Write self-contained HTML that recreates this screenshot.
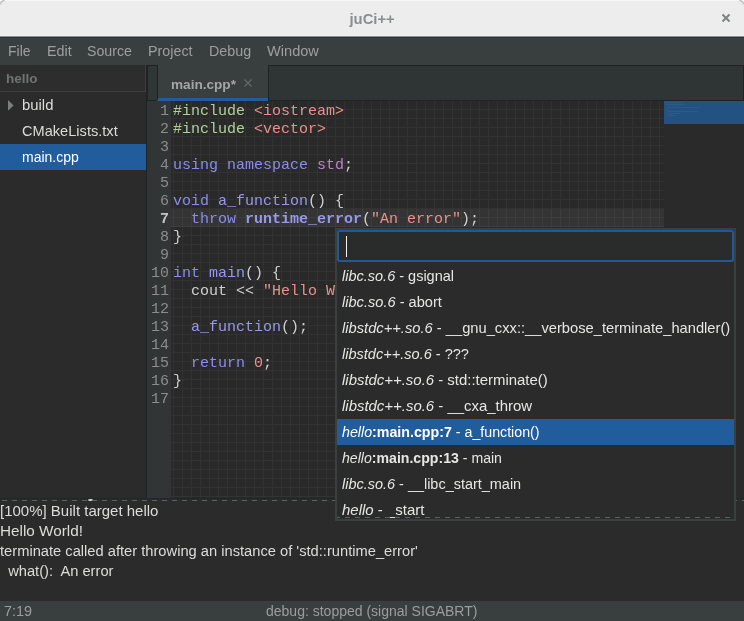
<!DOCTYPE html>
<html><head><meta charset="utf-8">
<style>
*{margin:0;padding:0;box-sizing:border-box}
html,body{width:744px;height:621px;overflow:hidden;background:#2b2b2b}
body{position:relative;font-family:"Liberation Sans",sans-serif;will-change:transform}
.a{position:absolute;white-space:pre}
#title{position:absolute;left:0;top:0;width:744px;height:38px;background:#ededed;border-radius:4.5px 4.5px 0 0;border-bottom:1px solid #2e3434;box-shadow:inset 0 -1px 0 #8d8f8f, inset 0 -2px 0 #f2f2f2}
#menubar{position:absolute;left:0;top:38px;width:744px;height:27px;background:#393f3f}
.mi{position:absolute;top:-1px;font-size:14px;line-height:28px;color:#9c9f9f}
#side{position:absolute;left:0;top:65px;width:146px;height:433px;background:#2b2b2b}
#sidehead{position:absolute;left:0;top:65px;width:146px;height:27px;background:#2d2d2d;border-bottom:1px solid #3a3e3e;border-right:1px solid #3a3e3e}
.tr{position:absolute;left:0;width:146px;height:26px}
.tt{position:absolute;left:22px;font-size:14px;color:#dcdcda;line-height:26px}
#sep{position:absolute;left:146px;top:65px;width:1px;height:433px;background:#1f2323}
#nbbox{position:absolute;left:147px;top:65px;width:11px;height:36px;background:#303535;border:1px solid #1f2323}
#nbhead{position:absolute;left:268px;top:65px;width:476px;height:36px;background:#2f3434;border:1px solid #1f2323}
#tab{position:absolute;left:158px;top:65px;width:110px;height:36px;background:#393f3f}
#tabline{position:absolute;left:157px;top:98px;width:111px;height:3px;background:#215d9c;clip-path:polygon(1.5px 0,100% 0,100% 100%,0 100%)}
#gutter{position:absolute;left:147px;top:101px;width:24px;height:397px;background:#313536}
#code{position:absolute;left:171px;top:101px;width:493px;height:397px;background-color:#292929;
 background-image:linear-gradient(to right,#323232 1px,transparent 1px),linear-gradient(to bottom,#323232 1px,transparent 1px);
 background-size:9px 9px;background-position:2px 8px}
#curline{position:absolute;left:171px;top:209px;width:493px;height:18px;background:rgba(255,255,255,0.055)}
#mini{position:absolute;left:664px;top:101px;width:80px;height:397px;background:#2a2a2a}
#minisel{position:absolute;left:664px;top:101px;width:80px;height:23px;background:#235282}
.mm{position:absolute;height:1px;background:rgba(200,210,230,0.06)}
.ln{position:absolute;left:147px;width:22px;text-align:right;font-family:"Liberation Mono",monospace;font-size:15px;line-height:18px;color:#8c8c8c;margin-top:2px}
.cl{position:absolute;left:173px;font-family:"Liberation Mono",monospace;font-size:15px;line-height:18px;color:#cfcfcf;white-space:pre;margin-top:2px}
.kw{color:#8b8bf0}.fn{color:#9898ec}.st{color:#e8918b}.pp{color:#b0d098}.ns{color:#c27fcf}.b{font-weight:bold}
#term{position:absolute;left:0;top:499px;width:744px;height:102px;background:#2b2b2b}
.tl{position:absolute;left:0;font-size:14.7px;line-height:20px;color:#dcdcda;white-space:pre;margin-top:2px}
#status{position:absolute;left:0;top:601px;width:744px;height:20px;background:#393f3f}
#popup{position:absolute;left:335px;top:228px;width:401px;height:292.5px;background:#2b2b2b;border:2px solid #3a3f3f;overflow:hidden}
#entry{position:absolute;left:0px;top:0px;width:397px;height:32px;border:2px solid #1f5996;border-radius:2.5px;background:#2a2b2b}
.pr{position:absolute;left:0;width:397px;height:26px;font-size:14.6px;line-height:26px;color:#e6e6e4;padding-left:5px;white-space:pre;text-indent:0;padding-top:0}

.pr i{font-style:italic}
.sel{background:#215d9c;color:#fff}
</style></head><body>
<div style="position:absolute;left:0;top:0;width:744px;height:8px;background:#fff"></div>
<div id="title">
 <div class="a" style="left:349.5px;top:8.5px;font-size:14.8px;font-weight:bold;color:#8b8e8f;line-height:20px">juCi++</div>
 <svg style="position:absolute;left:721px;top:13px" width="10" height="10" viewBox="0 0 10 10"><path d="M1.5 1.5L8.5 8.5M8.5 1.5L1.5 8.5" stroke="#7f8383" stroke-width="2"/></svg>
</div>
<svg style="position:absolute;left:0;top:0" width="8" height="8"><path d="M0.6 4.5A4 4 0 0 1 4.5 0.6" fill="none" stroke="#b9b9b9" stroke-width="1.1"/></svg>
<svg style="position:absolute;left:736px;top:0" width="8" height="8"><path d="M3.5 0.6A4 4 0 0 1 7.4 4.5" fill="none" stroke="#b9b9b9" stroke-width="1.1"/></svg>
<div style="position:absolute;left:5px;top:0;width:734px;height:1px;background:#f6f6f6"></div>
<div id="menubar">
 <div class="mi" style="left:8px">File</div>
 <div class="mi" style="left:47px;font-size:14.3px">Edit</div>
 <div class="mi" style="left:87px;font-size:14.2px">Source</div>
 <div class="mi" style="left:148px;font-size:14.3px">Project</div>
 <div class="mi" style="left:209px;font-size:14.3px">Debug</div>
 <div class="mi" style="left:267px;font-size:14.6px">Window</div>
</div>
<div id="side"></div>
<div id="sidehead"><div class="a" style="left:6px;top:0;font-size:13.5px;font-weight:bold;color:#6f7372;line-height:27px">hello</div></div>
<div class="tr" style="top:92px">
 <svg style="position:absolute;left:0;top:0" width="20" height="26"><polygon points="8,8 13.6,13.4 8,18.8" fill="#7c7f7f"/></svg>
 <div class="tt" style="font-size:14.9px">build</div></div>
<div class="tr" style="top:118px"><div class="tt" style="font-size:14.6px">CMakeLists.txt</div></div>
<div class="tr" style="top:144px;background:#215d9c"><div class="tt" style="color:#fff">main.cpp</div></div>
<div id="sep"></div>
<div id="nbbox"></div><div id="nbhead"></div>
<div id="tab">
 <div class="a" style="left:13px;top:10.5px;font-size:13.6px;font-weight:bold;color:#a3a6a6;line-height:18px">main.cpp*</div>
 <svg style="position:absolute;left:86px;top:14px" width="8" height="8" viewBox="0 0 8 8"><path d="M0.5 0.5L7.5 7.5M7.5 0.5L0.5 7.5" stroke="#646868" stroke-width="1.25"/></svg>
</div>
<div id="tabline"></div>
<div id="gutter"></div>
<div id="code"></div>
<div id="curline"></div>
<div id="mini"></div>
<div id="minisel"></div>
<div class="mm" style="left:665px;top:102px;width:19px"></div><div class="mm" style="left:666px;top:104px;width:19px"></div><div class="mm" style="left:667px;top:107px;width:33px"></div><div class="mm" style="left:666px;top:109px;width:2px"></div><div class="mm" style="left:667px;top:111px;width:31px"></div><div class="mm" style="left:668px;top:113px;width:12px"></div><div class="mm" style="left:667px;top:115px;width:9px"></div>
<!-- line numbers -->
<div class="ln" style="top:101px">1</div>
<div class="ln" style="top:119px">2</div>
<div class="ln" style="top:137px">3</div>
<div class="ln" style="top:155px">4</div>
<div class="ln" style="top:173px">5</div>
<div class="ln" style="top:191px">6</div>
<div class="ln" style="top:209px;color:#c4c4c4;font-weight:bold">7</div>
<div class="ln" style="top:227px">8</div>
<div class="ln" style="top:245px">9</div>
<div class="ln" style="top:263px">10</div>
<div class="ln" style="top:281px">11</div>
<div class="ln" style="top:299px">12</div>
<div class="ln" style="top:317px">13</div>
<div class="ln" style="top:335px">14</div>
<div class="ln" style="top:353px">15</div>
<div class="ln" style="top:371px">16</div>
<div class="ln" style="top:389px">17</div>
<!-- code -->
<div class="cl" style="top:101px"><span class="pp">#include</span> <span class="st">&lt;iostream&gt;</span></div>
<div class="cl" style="top:119px"><span class="pp">#include</span> <span class="st">&lt;vector&gt;</span></div>
<div class="cl" style="top:155px"><span class="kw">using</span> <span class="kw">namespace</span> <span class="ns">std</span>;</div>
<div class="cl" style="top:191px"><span class="kw">void</span> <span class="fn">a_function</span>() {</div>
<div class="cl" style="top:209px">  <span class="kw">throw</span> <span class="fn b">runtime_error</span>(<span class="st">"An error"</span>);</div>
<div class="cl" style="top:227px">}</div>
<div class="cl" style="top:263px"><span class="kw">int</span> <span class="fn">main</span>() {</div>
<div class="cl" style="top:281px">  cout &lt;&lt; <span class="st">"Hello World!"</span> &lt;&lt; endl;</div>
<div class="cl" style="top:317px">  <span class="fn">a_function</span>();</div>
<div class="cl" style="top:353px">  <span class="kw">return</span> <span class="st">0</span>;</div>
<div class="cl" style="top:371px">}</div>
<!-- terminal -->
<div id="term"></div>
<div style="position:absolute;left:88px;top:498.5px;width:5px;height:2px;border-radius:50%;background:#d8d8d8"></div>
<div style="position:absolute;left:0;top:498px;width:744px;height:1px;background:#232626"></div>
<div style="position:absolute;left:0;top:500px;width:744px;height:1px;background-image:linear-gradient(to right,#5e6060 5px,transparent 5px);background-size:10px 1px;background-position:2px 0"></div>
<div class="tl" style="top:499px;font-size:15px">[100%] Built target hello</div>
<div class="tl" style="top:519px;font-size:15.3px">Hello World!</div>
<div class="tl" style="top:539px">terminate called after throwing an instance of 'std::runtime_error'</div>
<div class="tl" style="top:559px">  what():  An error</div>
<div id="status">
 <div class="a" style="left:4px;top:0;font-size:14.4px;line-height:20px;color:#9a9d9d">7:19</div>
 <div class="a" style="left:266px;top:0;font-size:14px;line-height:20px;color:#9a9d9d">debug: stopped (signal SIGABRT)</div>
</div>
<!-- popup -->
<div id="popup">
 <div id="entry"><div style="position:absolute;left:7px;top:4px;width:1px;height:21px;background:#f0f0f0"></div></div>
 <div class="pr" style="top:33px;font-size:14.51px"><i>libc.so.6</i> - gsignal</div>
 <div class="pr" style="top:59px;font-size:14.62px"><i>libc.so.6</i> - abort</div>
 <div class="pr" style="top:85px;font-size:14.71px"><i>libstdc++.so.6</i> - __gnu_cxx::__verbose_terminate_handler()</div>
 <div class="pr" style="top:111px;font-size:14.56px"><i>libstdc++.so.6</i> - ???</div>
 <div class="pr" style="top:137px;font-size:14.93px"><i>libstdc++.so.6</i> - std::terminate()</div>
 <div class="pr" style="top:163px;font-size:14.94px"><i>libstdc++.so.6</i> - __cxa_throw</div>
 <div class="pr sel" style="top:189px;font-size:14.22px"><i>hello</i><b>:main.cpp:7</b> - a_function()</div>
 <div class="pr" style="top:215px;font-size:14.11px"><i>hello</i><b>:main.cpp:13</b> - main</div>
 <div class="pr" style="top:241px;font-size:14.46px"><i>libc.so.6</i> - __libc_start_main</div>
 <div class="pr" style="top:267px;font-size:14.97px"><i>hello</i> - _start</div>
<div style="position:absolute;left:0;top:287px;width:397px;height:1px;background-image:linear-gradient(to right,#5e6060 5px,transparent 5px);background-size:10px 1px;background-position:8px 0"></div>
</div>
</body></html>
